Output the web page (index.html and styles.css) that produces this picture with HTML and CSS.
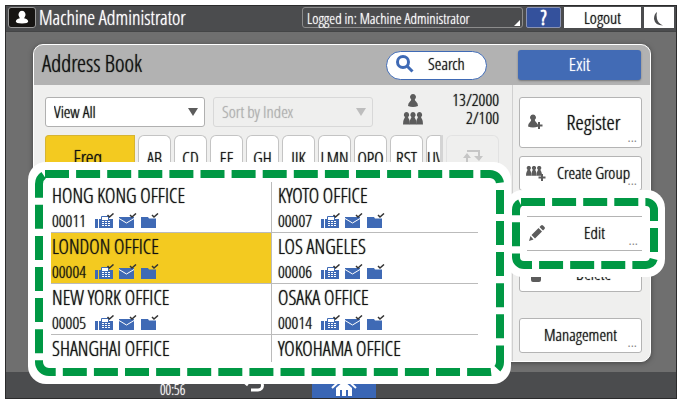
FILE: index.html
```html
<!DOCTYPE html>
<html lang="en">
<head>
<meta charset="utf-8">
<title>Address Book</title>
<link rel="stylesheet" href="styles.css">
</head>
<body>
<svg class="defs" aria-hidden="true">
  <symbol id="person" viewBox="0 0 10 13">
    <path d="M5 0a2.900 2.900 0 0 1 1.800 5.200q0 1.300 1.200 2.300 2 1.500 2 4.500-5 2-10 0 0-3 2-4.500 1.200-1 1.200-2.300A2.900 2.900 0 0 1 5 0z"/>
  </symbol>
  <symbol id="pawn" viewBox="0 0 7 13">
    <path d="M3.500 0a2.800 2.800 0 0 1 1.600 5q0 1 .9 2Q7 8.500 7 12.500H0Q0 8.500 1 7q.9-1 .9-2A2.800 2.800 0 0 1 3.500 0z"/>
  </symbol>
  <symbol id="group" viewBox="0 0 20 13">
    <use href="#pawn" x="0" width="7" height="13"/><use href="#pawn" x="6.500" width="7" height="13"/><use href="#pawn" x="13" width="7" height="13"/>
  </symbol>
  <symbol id="fax" viewBox="0 0 20 16">
    <path d="M0 6h3v9H0zM4 6h14v9H4z"/>
    <path class="paper" d="M6.500 7V3.500h7V7"/>
    <path class="cut" d="M7 8.500h8M7 10.500h8M7 12.500h8" stroke-dasharray="2 1"/>
    <path class="tick" d="m12.500 2 2 2 4-3.500"/>
  </symbol>
  <symbol id="mail" viewBox="0 0 20 16">
    <path d="M1 4h15v11H1z"/>
    <path class="flap" d="m1 5.500 7.500 4.500L16 5.500"/>
    <path class="tick" d="m12 2 2 2 4-3.500"/>
  </symbol>
  <symbol id="folder" viewBox="0 0 20 16">
    <path d="M0 4h7l1 1.500h7V15H0z"/>
    <path class="tick" d="m11 2 2 2 4-3.500"/>
  </symbol>
</svg>

<div class="device">
  <header class="topbar">
    <span class="avatar"><svg viewBox="0 0 26 20"><path d="M13 3a4 4 0 0 1 3 6.300l-.8 1.500q4.300 1 4.300 3.500 0 2-6.500 2t-6.500-2q0-2.500 4.300-3.500L10 9.300A4 4 0 0 1 13 3z"/></svg></span>
    <span class="user">Machine Administrator</span>
    <button class="login">Logged in: Machine Administrator</button>
    <button class="help">?</button>
    <button class="logout">Logout</button>
    <button class="sleep" aria-label="Sleep"><svg viewBox="0 0 12 16"><path d="M4 1Q1 3 1 8q1 6.500 9 6.500-5-2.500-6-6.500T4 1z"/></svg></button>
  </header>

  <main class="stage">
    <section class="panel">
      <div class="panel-head">
        <h1>Address Book</h1>
        <button class="search"><svg viewBox="0 0 18 18"><circle cx="7" cy="7" r="5.500"/><path d="m11 11 5.500 5.500"/></svg>Search</button>
        <button class="exit">Exit</button>
      </div>
      <div class="panel-body">
        <div class="browse">
          <div class="filters">
            <div class="picker"><select aria-label="View"><option>View All</option></select></div>
            <div class="picker off"><select aria-label="Sort" disabled><option>Sort by Index</option></select></div>
            <dl class="counts">
              <dt><svg class="one"><use href="#person"/></svg></dt><dd>13/2000</dd>
              <dt><svg class="many"><use href="#group"/></svg></dt><dd>2/100</dd>
            </dl>
          </div>
          <nav class="tabs">
            <button class="current">Freq.</button>
            <button>AB</button><button>CD</button><button>EF</button><button>GH</button><button>IJK</button><button>LMN</button><button>OPQ</button><button>RST</button><button class="cropped">UV</button>
            <button class="swap" aria-label="Switch title"><svg viewBox="0 0 22 16"><path class="line" d="M5 2h12v6M5 15V8m0 7h12"/><path d="M12 7h9l-4 5zM1 9l4-5 4 5z"/></svg></button>
          </nav>
        </div>
        <div class="actions">
          <button class="big"><svg class="icon" viewBox="0 0 20 18"><use href="#person" x="2" y="1" width="10" height="14"/><path class="plus" d="M13 9v7M9.500 12.500h7"/></svg><span>Register</span><i>...</i></button>
          <button><svg class="icon" viewBox="0 0 20 18"><use href="#group" x="0" y="1" width="16" height="12"/><path class="plus" d="M16 10v7M12.500 13.500h7"/></svg><span>Create Group</span><i>...</i></button>
          <div class="edit-slot"></div>
          <button><svg class="icon" viewBox="0 0 18 18"><path d="M3 2h4V1h4v1h4v2H3zM4 5h10v10q0 2-2 2H6q-2 0-2-2z"/></svg><span>Delete</span></button>
          <button class="manage"><span>Management</span><i>...</i></button>
        </div>
      </div>
    </section>
  </main>

  <footer class="bottombar">
    <time>00:56</time>
    <button class="back" aria-label="Back"><svg viewBox="0 0 24 20"><path d="M2 9h15a4 4 0 0 1 0 9h-7M9 2 2 9l5 4"/></svg></button>
    <button class="home" aria-label="Home"><svg viewBox="0 0 26 22"><path class="roof" d="M1 14 13 3l12 11"/><path class="wall" d="M5 14v8h4v-6h2v6h4v-6h2v6h4v-8l-8-7z"/></svg></button>
  </footer>

  <section class="callout list-callout">
    <svg class="dashes" viewBox="0 0 483 222" preserveAspectRatio="none"><path d="M17 12H462a10 10 0 0 1 10 10V200a10 10 0 0 1-10 10H21a10 10 0 0 1-10-10V22q0-6 5-9"/></svg>
    <table class="entries">
      <tr>
        <td><b>HONG KONG OFFICE</b><p><span>00011</span><svg><use href="#fax"/></svg><svg><use href="#mail"/></svg><svg><use href="#folder"/></svg></p></td>
        <td><b>KYOTO OFFICE</b><p><span>00007</span><svg><use href="#fax"/></svg><svg><use href="#mail"/></svg><svg><use href="#folder"/></svg></p></td>
      </tr>
      <tr>
        <td class="picked"><b>LONDON OFFICE</b><p><span>00004</span><svg><use href="#fax"/></svg><svg><use href="#mail"/></svg><svg><use href="#folder"/></svg></p></td>
        <td><b>LOS ANGELES</b><p><span>00006</span><svg><use href="#fax"/></svg><svg><use href="#mail"/></svg><svg><use href="#folder"/></svg></p></td>
      </tr>
      <tr>
        <td><b>NEW YORK OFFICE</b><p><span>00005</span><svg><use href="#fax"/></svg><svg><use href="#mail"/></svg><svg><use href="#folder"/></svg></p></td>
        <td><b>OSAKA OFFICE</b><p><span>00014</span><svg><use href="#fax"/></svg><svg><use href="#mail"/></svg><svg><use href="#folder"/></svg></p></td>
      </tr>
      <tr>
        <td><b>SHANGHAI OFFICE</b></td>
        <td><b>YOKOHAMA OFFICE</b></td>
      </tr>
    </table>
  </section>

  <section class="callout edit-callout">
    <svg class="dashes" viewBox="0 0 160 87" preserveAspectRatio="none"><path d="M16 12H141a8 8 0 0 1 8 8V67a8 8 0 0 1-8 8H19a8 8 0 0 1-8-8V20q0-5 4-7"/></svg>
    <button class="edit"><svg class="icon" viewBox="0 0 18 18"><path d="m1 17 1.500-5L5.500 15.500zM3.500 11l7-7 3.500 3.500-7 7zM11.500 3l1.500-1.500q1-1 2 0l1.500 1.500q1 1 0 2L15 6.500z"/></svg><span>Edit</span><i>...</i></button>
  </section>
</div>
</body>
</html>
```
FILE: styles.css
```css
* { box-sizing: border-box; }
body {
  margin: 0;
  padding: 5px 3px 5px 5px;
  height: 100vh;
  background: #fff;
  color: #111;
  font: 17px/20px "Open Sans Condensed Light", "Roboto Condensed", "Liberation Sans Narrow", sans-serif;
  text-shadow: 0 0 1px currentColor;
}
.defs { position: absolute; width: 0; height: 0; }
button, select { font: inherit; color: inherit; text-shadow: inherit; margin: 0; padding: 0; border: 0; background: none; }
svg { fill: #5c5c5c; }

.device {
  position: relative;
  display: flex;
  flex-direction: column;
  height: 100%;
  border: 1px solid #2b2b2c;
  background: #6f6f6f;
}

.topbar {
  display: flex;
  align-items: stretch;
  gap: 3px;
  height: 26px;
  padding: 1px 2px 3px;
  border-bottom: 1px solid #444546;
  background: #4b4c4e;
  color: #fff;
}
.avatar { width: 28px; border: 1px solid #999; border-radius: 3px; background: #161412; }
.avatar svg { display: block; width: 100%; height: 100%; fill: #fff; }
.user { flex: 1; font-size: 20px; line-height: 21px; }
.login {
  position: relative;
  width: 221px;
  padding-left: 4px;
  border: 1px solid #8c8c8c;
  border-radius: 3px;
  font-size: 15px;
  line-height: 16px;
  text-align: left;
}
.login::after {
  content: "";
  position: absolute;
  right: 2px;
  bottom: 1px;
  border: 3px solid #fff;
  border-top-color: transparent;
  border-left-color: transparent;
}
.help { width: 35px; border: 1px solid #8a93b4; border-radius: 2px; background: #34519c; font-size: 20px; font-weight: 700; line-height: 18px; }
.logout { width: 77px; background: #fff; color: #111; }
.sleep { width: 30px; background: #fff; }
.sleep svg { width: 12px; height: 16px; vertical-align: middle; fill: #4b4c4e; }

.stage { flex: 1; display: flex; padding: 12px 25px 10px 27px; }
.panel {
  flex: 1;
  display: flex;
  flex-direction: column;
  overflow: hidden;
  border: 1px solid #fff;
  border-radius: 10px;
  background: #efefee;
  box-shadow: 0 1px 5px #444;
}
.panel-head {
  display: flex;
  align-items: center;
  height: 40px;
  padding: 0 9px 0 8px;
  background: #b2b2b2;
}
h1 { flex: 1; margin: 0; padding-bottom: 4px; font-size: 23px; line-height: 28px; font-weight: 400; }
.search {
  display: flex;
  align-items: center;
  gap: 14px;
  width: 101px;
  height: 29px;
  padding: 0 0 2px 9px;
  border: 1px solid #3f6ab5;
  border-radius: 15px;
  background: #fff;
}
.search svg { width: 18px; height: 18px; fill: none; stroke: #3f6ab5; stroke-width: 3; }
.exit {
  width: 123px;
  height: 30px;
  margin-left: 31px;
  padding-bottom: 2px;
  border-radius: 3px;
  background: #426bb5;
  color: #fff;
  font-size: 19px;
  box-shadow: 0 1px 2px #777;
}

.panel-body { flex: 1; display: flex; }
.browse { flex: 1; min-width: 0; padding: 12px 13px 0 11px; border-right: 1px solid #d0d0d0; }
.filters { display: flex; gap: 8px; height: 30px; }
.picker { position: relative; width: 160px; height: 30px; }
.picker::after {
  content: "";
  position: absolute;
  top: 11px;
  right: 7px;
  border: 5px solid transparent;
  border-top: 8px solid #5c5c5c;
  border-bottom: 0;
  pointer-events: none;
}
.picker.off::after { border-top-color: #bdbdbd; }
select {
  appearance: none;
  width: 100%;
  height: 100%;
  padding: 0 20px 1px 8px;
  border: 1px solid #b0b0b0;
  border-radius: 3px;
  background: #fff;
}
select:disabled { border-color: #d8d8d8; background: #efefee; color: #b0b0b0; opacity: 1; }
.counts {
  flex: 1;
  display: grid;
  grid-template-columns: 42px 1fr;
  align-content: start;
  align-items: center;
  margin: -6px 0 0;
  line-height: 18px;
}
.counts dt { display: flex; justify-content: flex-end; }
.counts dd { margin: 0; text-align: right; }
.counts .one { width: 10px; height: 13px; margin-right: 5px; }
.counts .many { width: 20px; height: 13px; }

.tabs { display: flex; gap: 3px; height: 38px; margin-top: 8px; }
.tabs button { flex: 0 0 33px; border: 1px solid #c4c4c4; border-bottom: 0; border-radius: 6px 6px 0 0; background: #fff; padding-top: 6px; font-size: 18px; }
.tabs .current { flex: 0 0 90px; border-radius: 4px 0 0 0; border-color: #d6b433; background: #f3ca20; font-size: 20px; }
.tabs .cropped { flex: 0 0 17px; overflow: hidden; border-radius: 6px 0 0 0; border-right: 3px solid #d4d4d4; text-align: left; }
.tabs .swap { flex: 1; border-color: #e2e2e2; background: #efefee; }
.swap svg { width: 22px; height: 16px; fill: #c6c6c6; }
.swap .line { fill: none; stroke: #c6c6c6; stroke-width: 2; }

.actions { display: flex; flex-direction: column; gap: 8px; width: 137px; padding: 12px 8px 8px 6px; }
.actions button, .edit {
  position: relative;
  display: flex;
  align-items: center;
  gap: 6px;
  height: 35px;
  padding: 0 6px 2px;
  border: 1px solid #b4b4b4;
  border-radius: 3px;
  background: #fff;
}
.actions .big { height: 51px; font-size: 21px; }
.actions .manage { margin-top: auto; }
.actions span, .edit span { flex: 1; }
.icon { width: 20px; height: 18px; }
.plus { fill: none; stroke: #5c5c5c; stroke-width: 2; }
i { position: absolute; right: 4px; bottom: 4px; font: 12px/10px "Open Sans", sans-serif; color: #888; text-shadow: none; }
.edit-slot { height: 50px; }

.bottombar { display: flex; height: 26px; background: #4b4c4e; color: #fff; }
.bottombar time { width: 235px; padding: 10px 0 0 154px; font-size: 14px; line-height: 16px; }
.back { display: flex; width: 71px; }
.back svg { width: 24px; height: 20px; fill: none; stroke: #fff; stroke-width: 3; }
.home { display: flex; align-items: center; justify-content: center; width: 64px; background: #3a66b5; }
.home svg { width: 26px; height: 22px; fill: #fff; }
.home .roof { fill: none; stroke: #fff; stroke-width: 2; }

.callout { position: absolute; background: #fff; border-radius: 18px; }
.dashes { position: absolute; inset: 0; width: 100%; height: 100%; fill: none; stroke: #009844; stroke-width: 8; stroke-dasharray: 24 7.1; }
.list-callout { left: 22px; right: 165px; top: 156px; bottom: 14px; padding: 20px 33px 0 23px; }
.edit-callout { right: 11px; top: 184px; width: 160px; height: 87px; padding: 26px 23px 0 22px; }
.edit { width: 100%; border-width: 1px 0; border-radius: 0; padding: 0 6px 2px 0; }

.entries { width: 100%; border-collapse: separate; border-spacing: 0; table-layout: fixed; }
.entries td { height: 51px; padding: 0 6px 0 1px; vertical-align: top; border-bottom: 1px solid #bbb; }
.entries td:first-child { width: 221px; border-right: 1px solid #bbb; }
.entries tr:last-child td { height: 24px; border-bottom: 0; }
.entries td + td { padding-left: 6px; }
.entries .picked { background: #f3ca20; }
.entries b { display: block; font-size: 20px; line-height: 27px; font-weight: 400; }
.entries p { display: flex; align-items: center; gap: 3px; margin: 0; line-height: 23px; }
.entries p span { width: 40px; }
.entries svg { width: 20px; height: 16px; fill: #3f6ab5; }
.paper { fill: #fff; stroke: #3f6ab5; }
.cut { fill: none; stroke: #fff; }
.flap { fill: none; stroke: #fff; stroke-width: 1; }
.tick { fill: none; stroke: #333; stroke-width: 1.5; }
```
